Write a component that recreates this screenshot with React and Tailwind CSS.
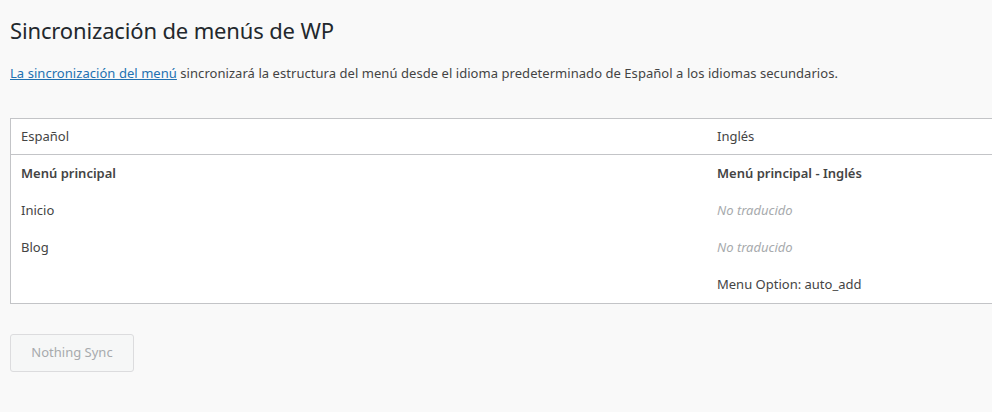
export default function App() {
  const rows = [
    { es: 'Menú principal', en: 'Menú principal - Inglés', bold: true },
    { es: 'Inicio', en: 'No traducido', muted: true },
    { es: 'Blog', en: 'No traducido', muted: true },
    { es: '', en: 'Menu Option: auto_add' },
  ];

  return (
    <div
      className="min-h-[412px] w-[992px] overflow-hidden bg-[#f9f9f9] text-[#444]"
      style={{ fontFamily: '"Noto Sans", "Open Sans", sans-serif' }}
    >
      <div className="pl-[10px] pt-[15px]">
        <h1 className="text-[22px] leading-[30px] font-normal tracking-[-0.15px] text-[#23282d]">
          Sincronización de menús de WP
        </h1>
        <p className="mt-[18px] text-[13px] leading-[20px] tracking-[0.05px]">
          <a href="#" className="text-[#2271b1] underline">La sincronización del menú</a>{' '}
          sincronizará la estructura del menú desde el idioma predeterminado de Español a los idiomas secundarios.
        </p>

        {/* menu table */}
        <div className="mt-[35px] w-[1400px] border border-[#c3c4c7] bg-white text-[13px]">
          <div className="grid grid-cols-[695px_1fr] h-[36px] items-center border-b border-[#c3c4c7]">
            <div className="pl-[10px]">Español</div>
            <div className="pl-[11px]">Inglés</div>
          </div>
          {rows.map((r, i) => (
            <div key={i} className="grid grid-cols-[695px_1fr] h-[37px] items-center">
              <div className={`pl-[10px] ${r.bold ? 'font-semibold' : ''}`}>{r.es}</div>
              <div
                className={`pl-[11px] ${r.bold ? 'font-semibold' : ''} ${r.muted ? 'italic text-[#a7aaad]' : ''}`}
              >
                {r.en}
              </div>
            </div>
          ))}
        </div>

        <button
          disabled
          className="mt-[30px] h-[38px] w-[124px] rounded-[3px] border border-[#dcdcde] bg-[#f6f7f7] text-[13px] text-[#a7aaad]"
        >
          Nothing Sync
        </button>
      </div>
    </div>
  );
}
